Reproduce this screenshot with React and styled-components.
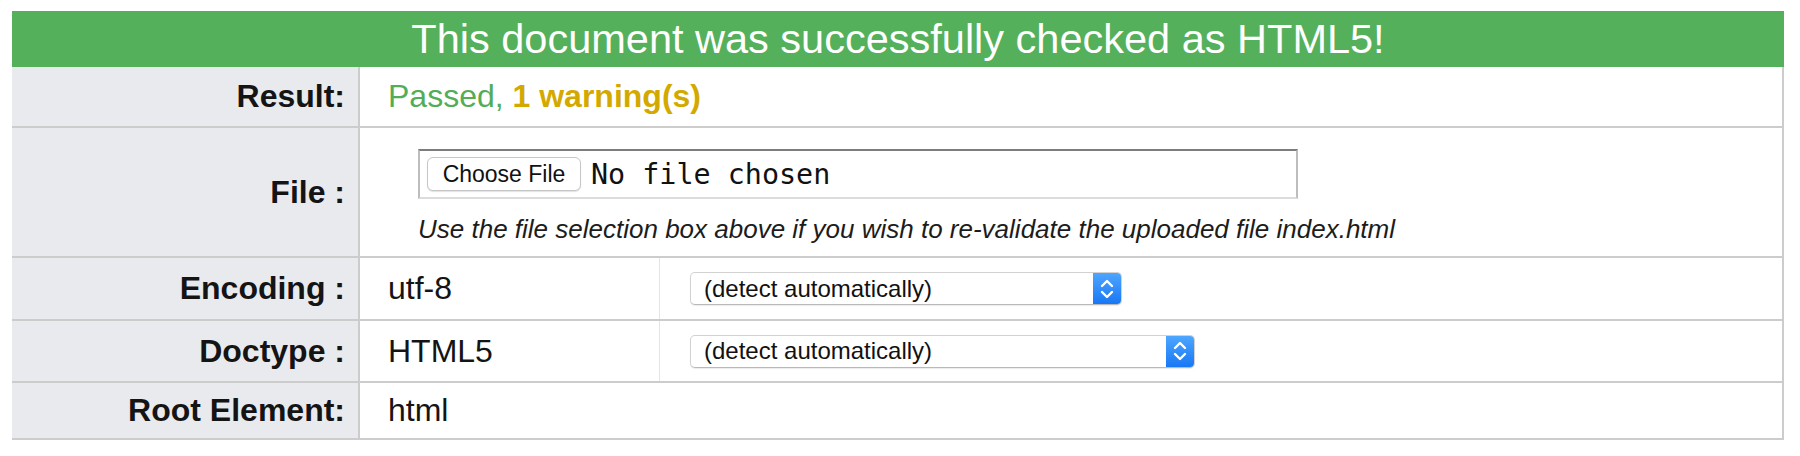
import React from 'react';
import styled, { createGlobalStyle } from 'styled-components';

const GlobalStyle = createGlobalStyle`
  html, body {
    margin: 0;
    padding: 0;
    background: #fff;
  }

  body {
    font-family: "Liberation Sans", Arial, Helvetica, sans-serif;
    color: #141414;
  }
`;

const Page = styled.div`
  padding: 11px 16px 0 12px;
`;

const Report = styled.div`
  width: 1772px;
`;

const Banner = styled.h2`
  margin: 0;
  height: 56px;
  display: flex;
  align-items: center;
  justify-content: center;
  background-color: #54b05b;
  color: #fff;
  font-weight: normal;
  font-size: 41.5px;
`;

const Row = styled.div`
  display: flex;
  height: ${props => props.$height}px;
  border-bottom: 2px solid #ccc;
  border-right: 2px solid #ccc;
`;

const Label = styled.div`
  flex: none;
  width: 348px;
  box-sizing: border-box;
  display: flex;
  align-items: center;
  justify-content: flex-end;
  padding-right: 13px;
  background-color: #e9eaed;
  border-right: 2px solid #ccc;
  font-size: 32px;
  font-weight: bold;
`;

const Value = styled.div`
  display: flex;
  align-items: center;
  box-sizing: border-box;
  padding-left: 28px;
  font-size: 32px;
  flex: ${props => (props.$width ? 'none' : '1')};
  width: ${props => (props.$width ? `${props.$width}px` : 'auto')};
  border-right: ${props => (props.$width ? '1px solid #e4e4e4' : 'none')};
`;

const OptionCell = styled.div`
  flex: 1;
  display: flex;
  align-items: center;
  padding-left: 30px;
`;

const Passed = styled.span`
  color: #52ad57;
`;

const Warnings = styled.strong`
  color: #d3a900;
`;

const FileCell = styled.div`
  flex: 1;
  display: flex;
  flex-direction: column;
  padding: 21px 0 0 58px;
`;

const FileBox = styled.div`
  width: 880px;
  height: 50px;
  box-sizing: border-box;
  display: flex;
  align-items: center;
  gap: 10px;
  padding-left: 7px;
  border: 2px solid #bdbdbd;
  border-top-color: #7d7d7d;
  border-bottom-color: #dcdcdc;
`;

const ChooseButton = styled.span`
  width: 154px;
  height: 34px;
  box-sizing: border-box;
  display: flex;
  align-items: center;
  justify-content: center;
  background: #fff;
  border: 1px solid #c6c6c6;
  border-radius: 6px;
  box-shadow: 0 1px 1px rgba(0, 0, 0, 0.12);
  font-size: 23px;
  color: #111;
`;

const NoFile = styled.span`
  font-family: "DejaVu Sans Mono", "Liberation Mono", monospace;
  font-size: 28.4px;
  color: #111;
`;

const Hint = styled.p`
  margin: 15px 0 0;
  font-size: 26px;
  line-height: 30px;
  font-style: italic;
  color: #1c1c1c;
`;

const Select = styled.div`
  width: ${props => props.$width}px;
  height: 33px;
  box-sizing: border-box;
  display: flex;
  align-items: center;
  border: 1px solid #d2d2d2;
  border-bottom-color: #b9b9b9;
  border-radius: 5px;
  box-shadow: 0 1px 1px rgba(0, 0, 0, 0.08);
  background: #fff;
  overflow: hidden;
`;

const SelectText = styled.span`
  flex: 1;
  padding-left: 13px;
  font-size: 24px;
  color: #111;
`;

const SelectArrow = styled.span`
  flex: none;
  width: 28px;
  height: 100%;
  display: flex;
  align-items: center;
  justify-content: center;
  background: linear-gradient(#4ea6ff, #1877f5);
`;

const Chevrons = () => (
  <svg width="16" height="24" viewBox="0 0 16 24">
    <path d="M3 9 L8 4 L13 9 M3 15 L8 20 L13 15" fill="none" stroke="#fff" strokeWidth="2.4" strokeLinecap="round" strokeLinejoin="round" />
  </svg>
);

const AutoSelect = ({ width }) => (
  <Select $width={width}>
    <SelectText>(detect automatically)</SelectText>
    <SelectArrow><Chevrons /></SelectArrow>
  </Select>
);

export default function App() {
  return (
    <Page>
      <GlobalStyle />
      <Report>
        <Banner>This document was successfully checked as HTML5!</Banner>
        <Row $height={59}>
          <Label>Result:</Label>
          <Value>
            <Passed>Passed,&nbsp;</Passed>
            <Warnings>1 warning(s)</Warnings>
          </Value>
        </Row>
        <Row $height={128}>
          <Label>File :</Label>
          <FileCell>
            <FileBox>
              <ChooseButton>Choose File</ChooseButton>
              <NoFile>No file chosen</NoFile>
            </FileBox>
            <Hint>Use the file selection box above if you wish to re-validate the uploaded file index.html</Hint>
          </FileCell>
        </Row>
        <Row $height={61}>
          <Label>Encoding :</Label>
          <Value $width={300}>utf-8</Value>
          <OptionCell><AutoSelect width={432} /></OptionCell>
        </Row>
        <Row $height={60}>
          <Label>Doctype :</Label>
          <Value $width={300}>HTML5</Value>
          <OptionCell><AutoSelect width={505} /></OptionCell>
        </Row>
        <Row $height={55}>
          <Label>Root Element:</Label>
          <Value>html</Value>
        </Row>
      </Report>
    </Page>
  );
}
